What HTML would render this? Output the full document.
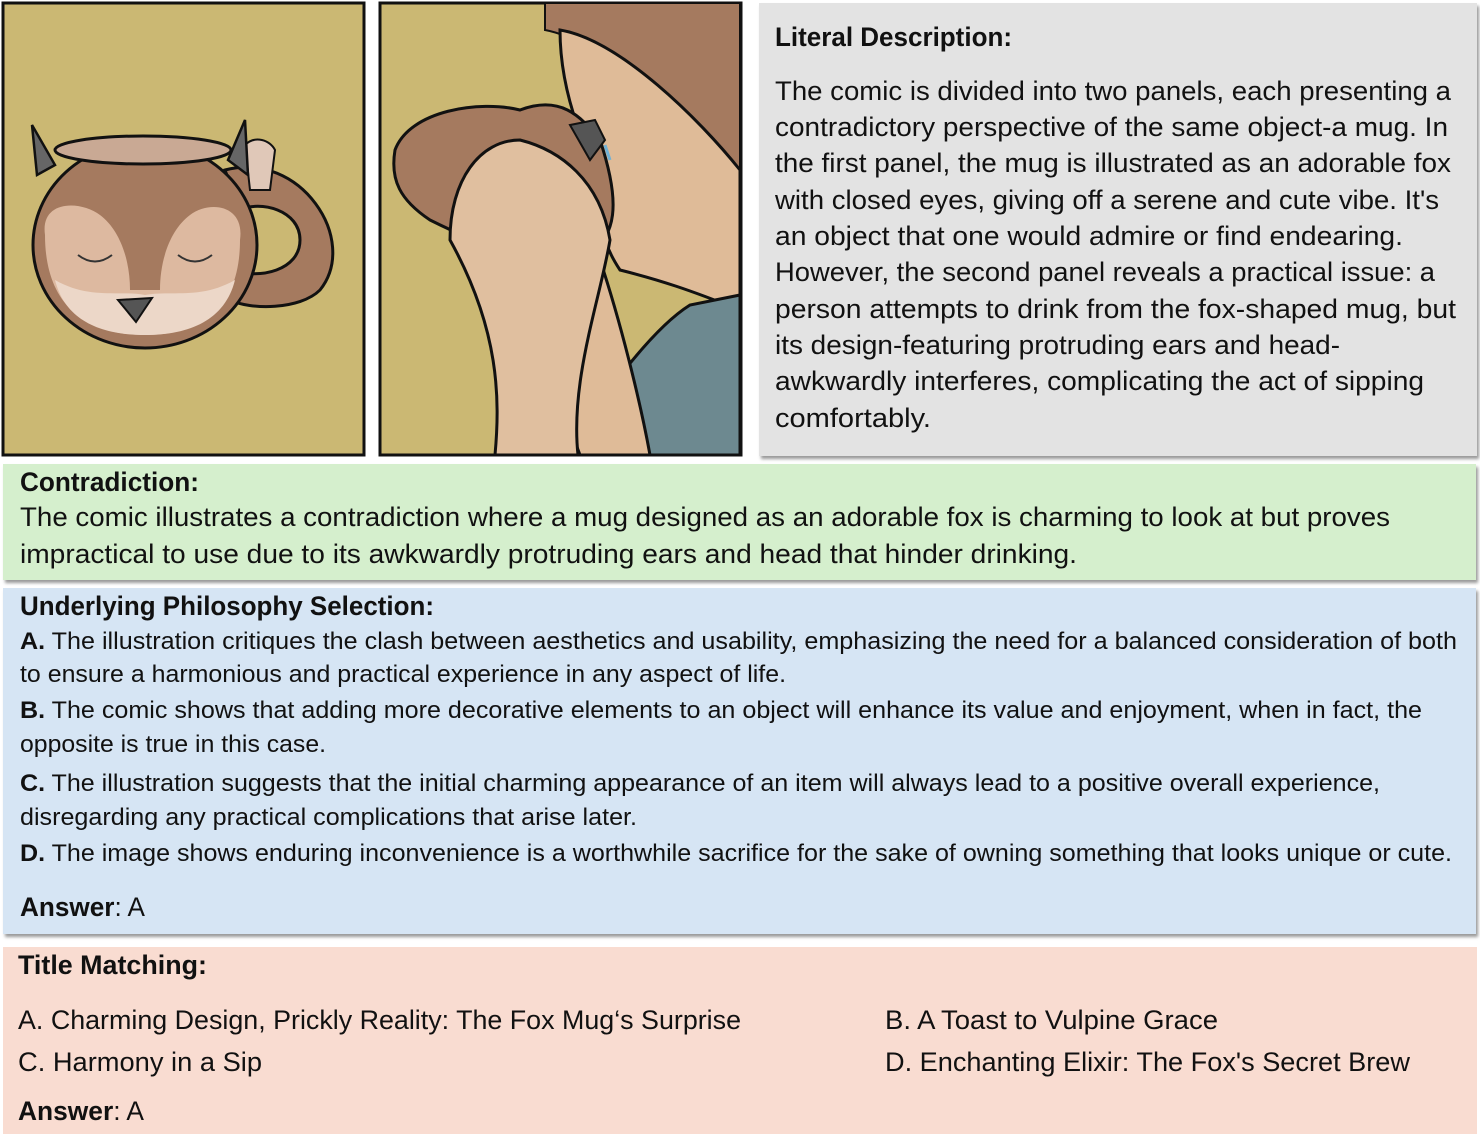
<!DOCTYPE html>
<html><head><meta charset="utf-8"><style>
html,body{margin:0;padding:0;background:#fff;}
body{width:1480px;height:1134px;position:relative;overflow:hidden;}
.box{position:absolute;}
svg.t{position:absolute;left:0;top:0;}
svg.t text{font-family:"Liberation Sans",sans-serif;fill:#111;}
</style></head><body>
<div class="box" style="left:759px;top:3px;width:718px;height:453px;background:#e3e3e3;box-shadow:2px 3px 3px #9a9a9a;"></div>
<div class="box" style="left:3px;top:464px;width:1473px;height:116px;background:#d5efcd;box-shadow:2px 3px 3px #9a9a9a;"></div>
<div class="box" style="left:3px;top:588px;width:1473px;height:346px;background:#d6e5f4;box-shadow:2px 3px 3px #9a9a9a;"></div>
<div class="box" style="left:3px;top:947px;width:1474px;height:187px;background:#f9dcd1;"></div>

<svg class="comic" style="position:absolute;left:0;top:0" width="760" height="460">
 <rect x="3" y="3" width="361" height="452" fill="#cbb873" stroke="#111" stroke-width="3"/>
 <!-- handle -->
 <path d="M225 170 C300 150 360 240 320 290 C300 310 250 310 230 300 L232 270 C260 280 300 270 300 240 C300 210 260 200 240 210 Z" fill="#a57a5f" stroke="#111" stroke-width="3"/>
 <path d="M245 145 C255 135 270 140 275 150 L270 190 L250 190 Z" fill="#e0c8b8" stroke="#111" stroke-width="2"/>
 <!-- body -->
 <ellipse cx="145" cy="245" rx="112" ry="103" fill="#a57a5f" stroke="#111" stroke-width="3"/>
 <ellipse cx="143" cy="150" rx="88" ry="14" fill="#c9a994" stroke="#111" stroke-width="3"/>
 <path d="M45 235 C40 200 80 200 100 215 C120 230 130 260 130 290 L160 290 C160 260 170 230 190 215 C210 200 245 205 240 240 C240 300 210 335 145 335 C80 335 45 300 45 235Z" fill="#ddb9a0"/>
 <path d="M55 280 C90 300 120 290 145 295 C170 290 200 300 235 280 C225 320 190 335 145 335 C100 335 65 320 55 280Z" fill="#ecd7c8"/>
 <path d="M118 300 L152 298 L136 322 Z" fill="#555" stroke="#111" stroke-width="2"/>
 <path d="M78 255 Q95 268 112 255 M178 255 Q195 268 212 255" stroke="#333" fill="none" stroke-width="2"/>
 <path d="M32 125 L55 165 L37 175 Z M245 120 L248 175 L228 160 Z" fill="#666" stroke="#111" stroke-width="2.5"/>
 <!-- panel 2 -->
 <rect x="380" y="3" width="361" height="452" fill="#cbb873" stroke="#111" stroke-width="3"/>
 <path d="M545 3 L740 3 L740 170 C700 120 600 40 545 30 Z" fill="#a57a5f" stroke="#111" stroke-width="2"/>
 <path d="M560 30 C620 40 700 120 740 170 L740 310 C690 290 660 280 620 270 C600 240 600 220 610 200 C590 160 560 100 560 30Z" fill="#dfbb98" stroke="#111" stroke-width="3"/>
 <path d="M740 295 L740 455 L565 455 C600 400 650 330 690 305 Z" fill="#6d8990" stroke="#111" stroke-width="3"/>
 <path d="M500 290 C530 330 560 400 580 455 L650 455 C640 400 620 320 600 260 Z" fill="#dfbb98" stroke="#111" stroke-width="3"/>
 <path d="M395 150 C410 110 480 100 520 110 C560 95 580 115 600 140 C620 200 620 240 580 260 C540 270 470 240 430 220 C400 200 390 180 395 150Z" fill="#a57a5f" stroke="#111" stroke-width="3"/>
 <path d="M450 240 C500 330 500 400 495 455 L578 455 C570 380 600 300 610 240 C600 180 560 150 520 140 C480 140 450 180 450 240Z" fill="#e0bf9f" stroke="#111" stroke-width="3"/>
 <path d="M570 125 L595 120 L605 140 L590 160 Z" fill="#555" stroke="#111" stroke-width="2"/>
 <path d="M605 145 L610 160" stroke="#6fb0d5" stroke-width="3"/>
</svg>

<svg class="t" width="1480" height="1134">
<g font-size="27">
<text x="775" y="46" font-weight="bold" textLength="237" lengthAdjust="spacingAndGlyphs">Literal Description:</text>
<text x="775" y="100" textLength="676" lengthAdjust="spacingAndGlyphs">The comic is divided into two panels, each presenting a</text>
<text x="775" y="136" textLength="673" lengthAdjust="spacingAndGlyphs">contradictory perspective of the same object-a mug. In</text>
<text x="775" y="172" textLength="676" lengthAdjust="spacingAndGlyphs">the first panel, the mug is illustrated as an adorable fox</text>
<text x="775" y="209" textLength="664" lengthAdjust="spacingAndGlyphs">with closed eyes, giving off a serene and cute vibe. It's</text>
<text x="775" y="245" textLength="628" lengthAdjust="spacingAndGlyphs">an object that one would admire or find endearing.</text>
<text x="775" y="281" textLength="660" lengthAdjust="spacingAndGlyphs">However, the second panel reveals a practical issue: a</text>
<text x="775" y="318" textLength="681" lengthAdjust="spacingAndGlyphs">person attempts to drink from the fox-shaped mug, but</text>
<text x="775" y="354" textLength="565" lengthAdjust="spacingAndGlyphs">its design-featuring protruding ears and head-</text>
<text x="775" y="390" textLength="649" lengthAdjust="spacingAndGlyphs">awkwardly interferes, complicating the act of sipping</text>
<text x="775" y="427" textLength="156" lengthAdjust="spacingAndGlyphs">comfortably.</text>
<text x="20" y="491" font-weight="bold" textLength="179" lengthAdjust="spacingAndGlyphs">Contradiction:</text>
<text x="20" y="526" textLength="1370" lengthAdjust="spacingAndGlyphs">The comic illustrates a contradiction where a mug designed as an adorable fox is charming to look at but proves</text>
<text x="20" y="563" textLength="1057" lengthAdjust="spacingAndGlyphs">impractical to use due to its awkwardly protruding ears and head that hinder drinking.</text>
<text x="20" y="615" font-weight="bold" textLength="414" lengthAdjust="spacingAndGlyphs">Underlying Philosophy Selection:</text>
<text x="20" y="916" textLength="125" lengthAdjust="spacingAndGlyphs"><tspan font-weight="bold">Answer</tspan>: A</text>
<text x="18" y="974" font-weight="bold" textLength="189" lengthAdjust="spacingAndGlyphs">Title Matching:</text>
<text x="18" y="1029" textLength="723" lengthAdjust="spacingAndGlyphs">A. Charming Design, Prickly Reality: The Fox Mug‘s Surprise</text>
<text x="885" y="1029" textLength="333" lengthAdjust="spacingAndGlyphs">B. A Toast to Vulpine Grace</text>
<text x="18" y="1071" textLength="244" lengthAdjust="spacingAndGlyphs">C.  Harmony in a Sip</text>
<text x="885" y="1071" textLength="525" lengthAdjust="spacingAndGlyphs">D.  Enchanting Elixir: The Fox's Secret Brew</text>
<text x="18" y="1120" textLength="126" lengthAdjust="spacingAndGlyphs"><tspan font-weight="bold">Answer</tspan>: A</text>
</g>
<g font-size="24">
<text x="20" y="649" textLength="1437" lengthAdjust="spacingAndGlyphs"><tspan font-weight="bold">A.</tspan> The illustration critiques the clash between aesthetics and usability, emphasizing the need for a balanced consideration of both</text>
<text x="20" y="682" textLength="766" lengthAdjust="spacingAndGlyphs">to ensure a harmonious and practical experience in any aspect of life.</text>
<text x="20" y="718" textLength="1402" lengthAdjust="spacingAndGlyphs"><tspan font-weight="bold">B.</tspan> The comic shows that adding more decorative elements to an object will enhance its value and enjoyment, when in fact, the</text>
<text x="20" y="752" textLength="306" lengthAdjust="spacingAndGlyphs">opposite is true in this case.</text>
<text x="20" y="791" textLength="1360" lengthAdjust="spacingAndGlyphs"><tspan font-weight="bold">C.</tspan> The illustration suggests that the initial charming appearance of an item will always lead to a positive overall experience,</text>
<text x="20" y="825" textLength="617" lengthAdjust="spacingAndGlyphs">disregarding any practical complications that arise later.</text>
<text x="20" y="861" textLength="1432" lengthAdjust="spacingAndGlyphs"><tspan font-weight="bold">D.</tspan> The image shows enduring inconvenience is a worthwhile sacrifice for the sake of owning something that looks unique or cute.</text>
</g>
</svg>
</body></html>
